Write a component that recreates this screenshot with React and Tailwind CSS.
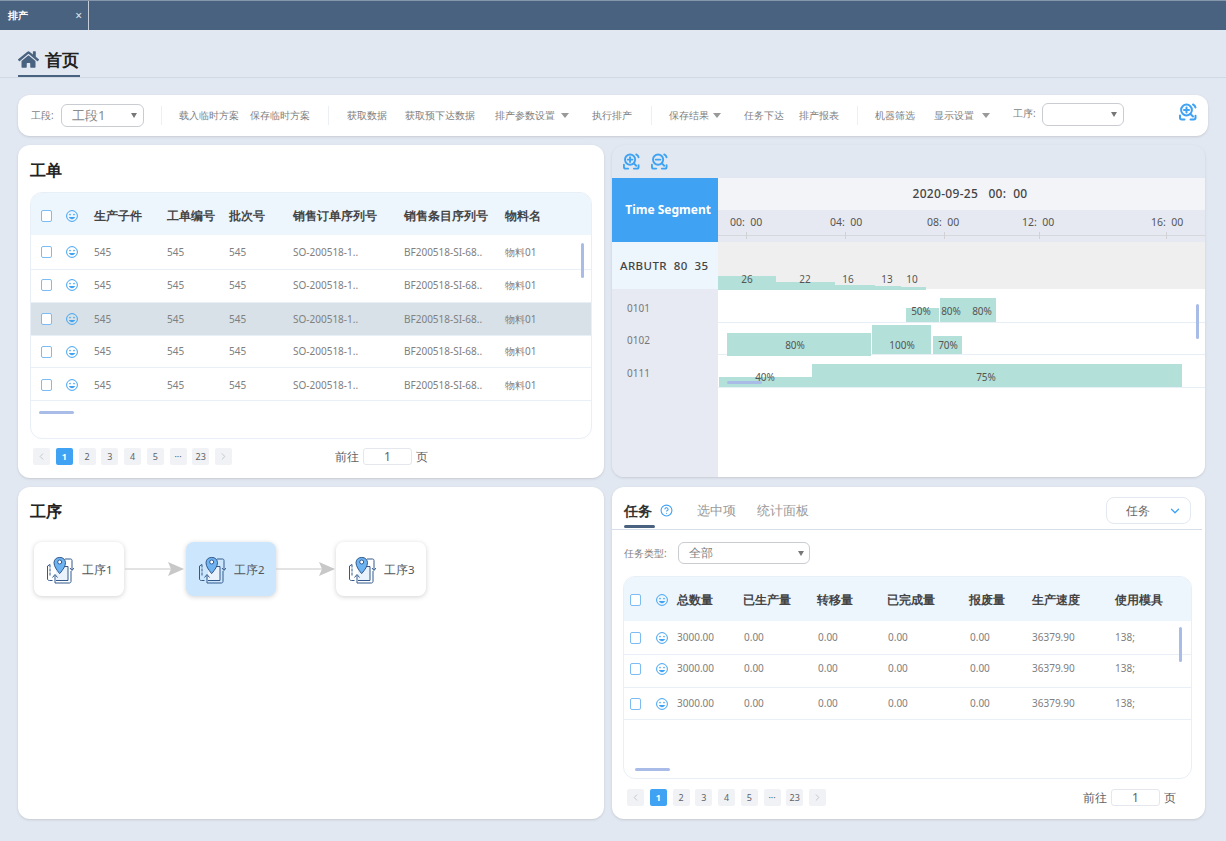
import React from "react";
import { FaHome } from "react-icons/fa";
import { ChevronDown, ChevronLeft, ChevronRight, CircleHelp } from "lucide-react";

const orderCols = "grid-cols-[25px_28px_73px_62px_64px_111px_101px_1fr]";
const taskCols = "grid-cols-[26px_21px_66px_74px_70px_82px_63px_83px_1fr]";

const orderRows = [
  { h: "h-[35px]" },
  { h: "h-[33px] pb-[2px]" },
  { h: "h-[33px]", selected: true },
  { h: "h-[32px]" },
  { h: "h-[33px] pt-[2px]" },
];
const taskRows = ["h-[34px]", "h-[33px] pb-[5px]", "h-[32px]"];

const loadBars = [
  "left-[0px] top-[34px] w-[58px] h-[14px]",
  "left-[58px] top-[40px] w-[59px] h-[8px]",
  "left-[117px] top-[43px] w-[40px] h-[5px]",
  "left-[157px] top-[44px] w-[26px] h-[4px]",
  "left-[183px] top-[45px] w-[25px] h-[3px]",
];
const chartBars = [
  "left-[188px] top-[66px] w-[33px] h-[14px]",
  "left-[222px] top-[56px] w-[56px] h-[24px]",
  "left-[9px] top-[91px] w-[144px] h-[23px]",
  "left-[154px] top-[83px] w-[59px] h-[29px]",
  "left-[215px] top-[94px] w-[29px] h-[18px]",
  "left-[1px] top-[135px] w-[93px] h-[10px]",
  "left-[94px] top-[122px] w-[370px] h-[23px]",
];
const chartLabels = [
  ["26", "left-[29px] top-[37px]"],
  ["22", "left-[87px] top-[37px]"],
  ["16", "left-[130px] top-[37px]"],
  ["13", "left-[169px] top-[37px]"],
  ["10", "left-[194px] top-[37px]"],
  ["50%", "left-[203px] top-[69px]"],
  ["80%", "left-[233px] top-[69px]"],
  ["80%", "left-[264px] top-[69px]"],
  ["80%", "left-[77px] top-[103px]"],
  ["100%", "left-[184px] top-[103px]"],
  ["70%", "left-[230px] top-[103px]"],
  ["40%", "left-[47px] top-[135px]"],
  ["75%", "left-[268px] top-[135px]"],
];
const axis = [
  ["00: 00", "left-[12px]", "left-[28px]"],
  ["04: 00", "left-[112px]", "left-[127px]"],
  ["08: 00", "left-[209px]", "left-[226px]"],
  ["12: 00", "left-[304px]", "left-[321px]"],
  ["16: 00", "left-[433px]", "left-[448px]"],
];

function Caret({ className = "" }) {
  return (
    <svg width="8" height="5" viewBox="0 0 8 5" className={`shrink-0 ${className}`}>
      <path d="M0 0h8L4 5z" fill="#999" />
    </svg>
  );
}

function SmallCaret() {
  return (
    <svg width="6" height="5" viewBox="0 0 6 5" className="shrink-0">
      <path d="M0 0h6L3 5z" fill="#777" />
    </svg>
  );
}

function Divider({ className = "" }) {
  return <div className={`w-px h-[19px] bg-[#eceff3] shrink-0 ${className}`} />;
}

function Smile() {
  return (
    <svg width="12" height="12" viewBox="0 0 12 12" fill="none">
      <circle cx="6" cy="6" r="5.4" stroke="#3fa2f2" strokeWidth="1" />
      <circle cx="4" cy="4.6" r="0.8" fill="#3fa2f2" />
      <circle cx="8" cy="4.6" r="0.8" fill="#3fa2f2" />
      <path d="M3 7h6c-.3 1.4-1.5 2.2-3 2.2S3.300 8.400 3 7z" fill="#3fa2f2" />
    </svg>
  );
}

function Check() {
  return <div className="w-[11px] h-[12px] bg-white border border-[#7dbcf3] rounded-[2px]" />;
}

function ZoomIcon({ minus, size = 18 }) {
  return (
    <svg width={size} height={size} viewBox="0 0 18 18" fill="none" stroke="#3fa2f2" strokeWidth="2" strokeLinecap="round">
      <circle cx="7.500" cy="7" r="5.400" />
      <path d="M5 7h5" />
      {!minus && <path d="M7.500 4.500v5" />}
      <path d="M11.500 11l2.500 2.500" />
      <path d="M14 1.500c1.300.6 2.200 1.600 2.500 3" />
      <path d="M1 12.500v2.300c0 1 .7 1.700 1.700 1.700h2.800" />
      <path d="M11.500 16.500h3.300c1 0 1.700-.7 1.700-1.700v-2" />
    </svg>
  );
}

function StepIcon() {
  return (
    <svg width="28" height="29" viewBox="0 0 28 29" fill="none" stroke="#33598c" strokeWidth="1">
      <path d="M4 9.500L1.500 11v13" />
      <path d="M1.500 24c0 1 1 1.500 2 1.500h3" />
      <path d="M4 9.500v12" strokeDasharray="3 1" />
      <path d="M10 11.500H22v14H10" fill="#eaf3fb" />
      <path d="M9 28h14.500c.8 0 1.500-.7 1.500-1.500V16" />
      <path d="M9 28v-7.500" />
      <path d="M6.500 22.500L9 19.500l2.500 3" />
      <path d="M19 4h5.500c1 0 1.500.7 1.500 1.500V15" />
      <path d="M24 13l2 2.500 2-2.500" />
      <path d="M13.500 18.500C10.500 14.500 8 11.500 8 7.500a5.800 5.800 0 0 1 11.500 0c0 4-2.500 7-5.700 11z" fill="#6db3f2" />
      <circle cx="13.700" cy="7" r="2" fill="#fff" />
    </svg>
  );
}

function Arrow({ className = "" }) {
  return (
    <svg width="60" height="14" viewBox="0 0 60 14" className={`shrink-0 ${className}`}>
      <path d="M0 7h46" stroke="#c8c8c8" strokeWidth="1.200" />
      <path d="M43 0l16 7-16 7 3-7z" fill="#c8c8c8" />
    </svg>
  );
}

function PageButton({ children, active }) {
  return (
    <div
      className={`w-[17px] h-[17px] rounded-[2px] flex items-center justify-center text-[9px] ${
        active ? "bg-[#3fa2f2] text-white font-bold" : "bg-[#f0f2f5] text-[#606266]"
      }`}
    >
      {children}
    </div>
  );
}

function Pager({ jumpClass }) {
  return (
    <div className="flex items-center ml-[15px] h-[17px]">
      <div className="flex items-center gap-[5.75px]">
        <PageButton>
          <ChevronLeft size={11} color="#c0c4cc" />
        </PageButton>
        <PageButton active>1</PageButton>
        <PageButton>2</PageButton>
        <PageButton>3</PageButton>
        <PageButton>4</PageButton>
        <PageButton>5</PageButton>
        <PageButton>···</PageButton>
        <PageButton>23</PageButton>
        <PageButton>
          <ChevronRight size={11} color="#c0c4cc" />
        </PageButton>
      </div>
      <div className={`flex items-center text-xs text-[#606266] ${jumpClass}`}>
        <span>前往</span>
        <div className="w-[49px] h-[17px] mx-1 border border-[#e4e7ed] rounded-[3px] flex items-center justify-center">1</div>
        <span>页</span>
      </div>
    </div>
  );
}

function ScrollV({ className }) {
  return <div className={`absolute w-[3px] bg-[#a9bce8] rounded-sm ${className}`} />;
}

function ScrollH({ className }) {
  return <div className={`absolute h-[3px] bg-[#a9bce8] rounded-sm ${className}`} />;
}

function OrderTable() {
  const heads = ["生产子件", "工单编号", "批次号", "销售订单序列号", "销售条目序列号", "物料名"];
  return (
    <div className="relative h-[247px] mx-3 mt-3 border border-[#e9eff6] rounded-xl overflow-hidden">
      <div className={`grid ${orderCols} items-center h-[42px] pl-[10px] pt-[3px] bg-[#edf5fd] text-[11.700px] font-bold text-[#444]`}>
        <Check />
        <Smile />
        {heads.map((h) => (
          <span key={h} className="whitespace-nowrap">{h}</span>
        ))}
      </div>
      {orderRows.map((row, i) => (
        <div
          key={i}
          className={`grid ${orderCols} items-center ${row.h} pl-[10px] border-b border-[#e9eff6] text-[10px] text-[#808080] ${
            row.selected ? "bg-[#d7e1e7]" : "bg-white"
          }`}
        >
          <Check />
          <Smile />
          <span>545</span>
          <span>545</span>
          <span>545</span>
          <span>SO-200518-1..</span>
          <span>BF200518-SI-68..</span>
          <span>物料01</span>
        </div>
      ))}
      <ScrollV className="left-[550px] top-[50px] h-[35px]" />
      <ScrollH className="left-[8px] top-[218px] w-[35px]" />
    </div>
  );
}

function Toolbar() {
  return (
    <div className="flex items-center h-[41px] mx-[18px] mt-[17px] pl-[13px] pr-[9px] bg-white rounded-xl shadow-sm text-[10px] text-[#7f7f7f] whitespace-nowrap">
      <span className="w-[30px]">工段:</span>
      <div className="flex items-center justify-between w-[83px] h-[23px] pl-[10px] pr-[6px] border border-[#c9ccd1] rounded-md text-[13px] text-[#8a8a8a]">
        工段1
        <SmallCaret />
      </div>
      <Divider className="ml-[17px]" />
      <span className="ml-[17px]">载入临时方案</span>
      <span className="ml-[11px]">保存临时方案</span>
      <Divider className="ml-[18px]" />
      <span className="ml-[18px]">获取数据</span>
      <span className="ml-[18px]">获取预下达数据</span>
      <span className="ml-[20px]">排产参数设置</span>
      <Caret className="ml-[6px]" />
      <span className="ml-[23px]">执行排产</span>
      <Divider className="ml-[19px]" />
      <span className="ml-[17px]">保存结果</span>
      <Caret className="ml-[4px]" />
      <span className="ml-[23px]">任务下达</span>
      <span className="ml-[15px]">排产报表</span>
      <Divider className="ml-[18px]" />
      <span className="ml-[17px]">机器筛选</span>
      <span className="ml-[19px]">显示设置</span>
      <Caret className="ml-[8px]" />
      <span className="ml-[23px] w-[30px] mb-[4px]">工序:</span>
      <div className="flex items-center justify-end w-[82px] h-[23px] pr-[6px] mb-[2px] -ml-px border border-[#c9ccd1] rounded-md">
        <SmallCaret />
      </div>
      <div className="ml-auto mr-[2px] mb-[7px]">
        <ZoomIcon />
      </div>
    </div>
  );
}

function Gantt() {
  return (
    <div className="flex flex-col h-[332px] bg-[#e2e8f1] rounded-xl overflow-hidden shadow-sm">
      <div className="flex items-center gap-[11px] h-[33px] pl-[11px] shrink-0">
        <ZoomIcon size={17} />
        <ZoomIcon minus size={17} />
      </div>
      <div className="flex flex-1">
        <div className="flex flex-col w-[106px] shrink-0 bg-[#e7eaf2]">
          <div className="flex items-center justify-end h-[64px] pr-[7px] bg-[#3fa2f2] text-xs font-bold text-white">
            Time Segment
          </div>
          <div className="flex items-center h-[47px] pl-2 bg-[#edf5fd] text-[11.500px] font-medium text-[#444] tracking-[0.4px] whitespace-pre">
            ARBUTR  80  35
          </div>
          <div className="flex flex-col text-[10px] text-[#777] pl-[15px] pt-[12px]">
            <span className="h-[32px] leading-[14px]">0101</span>
            <span className="h-[33px] leading-[14px]">0102</span>
            <span className="leading-[14px]">0111</span>
          </div>
        </div>
        <div className="flex flex-col flex-1">
          <div className="flex items-center justify-center h-[32px] pl-[17px] bg-[#f2f4f8] text-xs font-medium tracking-[0.3px] text-[#444] whitespace-pre">
            2020-09-25   00:  00
          </div>
          <div className="relative h-[32px] bg-[#e6e9f1] text-[10.500px] text-[#555]">
            {axis.map(([label, textPos]) => (
              <span key={label} className={`absolute top-[5px] whitespace-pre ${textPos}`}>
                {label.replace(": ", ":  ")}
              </span>
            ))}
            <div className="absolute left-0 right-0 top-[25px] h-px bg-[#d6d8dc]" />
            {axis.map(([label, , tickPos]) => (
              <div key={label} className={`absolute top-[22px] w-px h-[7px] bg-[#d0d2d6] ${tickPos}`} />
            ))}
          </div>
          <div className="relative flex-1 bg-white overflow-hidden text-[10px] text-[#555]">
            <div className="h-[47px] bg-[#efefef]" />
            <div className="absolute left-0 right-0 top-[80px] h-px bg-[#e6eef6]" />
            <div className="absolute left-0 right-0 top-[112px] h-px bg-[#e6eef6]" />
            <div className="absolute left-0 right-0 top-[145px] h-px bg-[#e6eef6]" />
            {loadBars.map((pos) => (
              <div key={pos} className={`absolute bg-[#b3e0d8] ${pos}`} />
            ))}
            {chartBars.map((pos) => (
              <div key={pos} className={`absolute bg-[#b3e0d8] ${pos}`} />
            ))}
            {chartLabels.map(([text, pos]) => (
              <span key={pos} className={`absolute -translate-x-1/2 -translate-y-1/2 ${pos}`}>
                {text}
              </span>
            ))}
            <ScrollH className="left-[9px] top-[139px] w-[35px] bg-[#8fa8d6]" />
            <ScrollV className="left-[478px] top-[62px] h-[35px]" />
          </div>
        </div>
      </div>
    </div>
  );
}

function StepNode({ label, active }) {
  return (
    <div
      className={`flex items-center w-[90px] h-[54px] pl-3 gap-2 rounded-lg shadow-[0_1px_5px_rgba(0,0,0,0.18)] shrink-0 ${
        active ? "bg-[#cce7fd]" : "bg-white"
      }`}
    >
      <StepIcon />
      <span className="pt-px text-[11.500px] text-[#555] whitespace-nowrap">{label}</span>
    </div>
  );
}

function TaskPanel() {
  const heads = ["总数量", "已生产量", "转移量", "已完成量", "报废量", "生产速度", "使用模具"];
  return (
    <div className="h-[332px] bg-white rounded-xl shadow-sm">
      <div className="relative flex items-center h-[43px] mr-[3px] pl-3 pt-[5px] border-b border-[#d6deea]">
        <span className="text-sm font-bold text-[#333]">任务</span>
        <CircleHelp size={13} color="#3fa2f2" className="ml-2" />
        <span className="ml-6 text-[13px] text-[#9a9a9a]">选中项</span>
        <span className="ml-[21px] text-[13px] text-[#9a9a9a]">统计面板</span>
        <div className="absolute left-3 top-[38px] w-[31px] h-[3px] bg-[#48627f] rounded-sm" />
        <div className="flex items-center ml-auto mr-[11px] w-[85px] h-[27px] pl-[19px] border border-[#e3e9f1] rounded-lg text-xs text-[#666]">
          任务
          <ChevronDown size={14} color="#3fa2f2" strokeWidth={2.200} className="ml-[18px]" />
        </div>
      </div>
      <div className="flex items-center mt-[12px] ml-3 h-[22px] text-[10px] text-[#7f7f7f]">
        <span className="w-[54px]">任务类型:</span>
        <div className="flex items-center justify-between w-[132px] h-[22px] pl-[10px] pr-[5px] border border-[#c9ccd1] rounded-md text-xs">
          全部
          <SmallCaret />
        </div>
      </div>
      <div className="relative h-[203px] ml-[11px] mr-[13px] mt-3 border border-[#e9eff6] rounded-xl overflow-hidden">
        <div className={`grid ${taskCols} items-center h-[44px] pl-[6px] pt-[2px] bg-[#edf5fd] text-[11.700px] font-bold text-[#444]`}>
          <Check />
          <Smile />
          {heads.map((h) => (
            <span key={h} className="whitespace-nowrap">{h}</span>
          ))}
        </div>
        {taskRows.map((h, i) => (
          <div key={i} className={`grid ${taskCols} items-center ${h} pl-[6px] border-b border-[#e9eff6] text-[10px] text-[#808080]`}>
            <Check />
            <Smile />
            <span>3000.00</span>
            <span className="pl-px">0.00</span>
            <span className="pl-px">0.00</span>
            <span className="pl-px">0.00</span>
            <span className="pl-px">0.00</span>
            <span>36379.90</span>
            <span>138;</span>
          </div>
        ))}
        <ScrollV className="left-[555px] top-[50px] h-[35px]" />
        <ScrollH className="left-[11px] top-[191px] w-[35px]" />
      </div>
      <div className="mt-[10px]">
        <Pager jumpClass="ml-auto mr-[29px]" />
      </div>
    </div>
  );
}

export default function App() {
  return (
    <div className="w-[1226px] h-[841px] bg-[#e2e8f1] overflow-hidden [font-family:'Noto_Sans_CJK_SC',sans-serif]">
      <div className="h-[30px] bg-[#48627f] border-t border-[#8797ab]">
        <div className="flex items-center justify-between w-[89px] h-full pl-2 pr-[6px] border-r border-[#c5ced8] text-[10px] font-bold text-white">
          排产
          <span className="text-xs font-normal text-[#dfe5ec]">×</span>
        </div>
      </div>
      <div className="h-[48px] border-b border-[#cfd9e6] px-[18px]">
        <div className="flex items-center gap-[6px] w-[62px] h-[47px] pt-[14px] border-b-2 border-[#48627f]">
          <FaHome size={21} color="#48627f" className="shrink-0" />
          <span className="text-[17px] font-bold text-[#222] whitespace-nowrap">首页</span>
        </div>
      </div>
      <Toolbar />
      <div className="grid grid-cols-[586px_593px] gap-x-2 gap-y-[9px] mx-[18px] mt-[9px]">
        <div className="h-[333px] bg-white rounded-xl shadow-sm pt-[15px]">
          <div className="pl-3 text-base leading-5 font-bold text-[#222]">工单</div>
          <OrderTable />
          <div className="mt-[9px]">
            <Pager jumpClass="ml-[103px]" />
          </div>
        </div>
        <Gantt />
        <div className="h-[332px] bg-white rounded-xl shadow-sm pt-[14px]">
          <div className="pl-3 text-base leading-5 font-bold text-[#222]">工序</div>
          <div className="flex items-center ml-4 mt-[21px]">
            <StepNode label="工序1" />
            <Arrow className="mx-px" />
            <StepNode label="工序2" active />
            <Arrow />
            <StepNode label="工序3" />
          </div>
        </div>
        <TaskPanel />
      </div>
    </div>
  );
}
